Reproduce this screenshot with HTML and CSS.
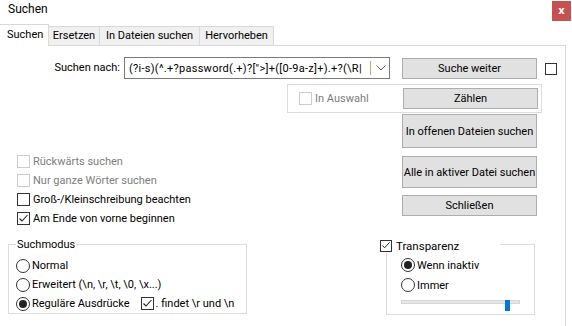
FILE: index.html
```html
<!DOCTYPE html>
<html lang="de">
<head>
<meta charset="utf-8">
<title>Suchen</title>
<link rel="stylesheet" href="styles.css">
</head>
<body>
<div class="window">
  <div class="titlebar">
    <span class="title">Suchen</span>
    <span class="close">x</span>
  </div>
  <div class="tabs">
    <div class="tab active">Suchen</div>
    <div class="tab t-ersetzen">Ersetzen</div>
    <div class="tab t-dateien">In Dateien suchen</div>
    <div class="tab t-hervor">Hervorheben</div>
  </div>
  <div class="panel">
    <div class="row-find">
      <label class="find-label">Suchen nach:</label>
      <div class="combo">
        <span class="combo-text">(?i-s)(^.+?password(.+)?["&gt;]+([0-9a-z]+).+?(\R|</span>
        <span class="combo-caret"></span>
        <span class="combo-arrow"><svg width="10" height="6" viewBox="0 0 10 6"><path d="M0.5 0.5 L5 5 L9.5 0.5" fill="none" stroke="#6d6d6d" stroke-width="1"/></svg></span>
      </div>
      <div class="btn btn-next">Suche weiter</div>
      <span class="cb cb-top"></span>
    </div>

    <div class="sel-group">
      <span class="cb disabled"></span>
      <span class="lbl disabled-text">In Auswahl</span>
      <div class="btn btn-count">Zählen</div>
    </div>

    <div class="mid">
      <div class="opts">
        <div class="opt"><span class="cb disabled"></span><span class="lbl disabled-text">Rückwärts suchen</span></div>
        <div class="opt"><span class="cb disabled"></span><span class="lbl disabled-text">Nur ganze Wörter suchen</span></div>
        <div class="opt"><span class="cb"></span><span class="lbl">Groß-/Kleinschreibung beachten</span></div>
        <div class="opt"><span class="cb checked"><svg width="11" height="11" viewBox="0 0 11 11"><path d="M1.5 5.5 L4 8 L9.5 2" fill="none" stroke="#222" stroke-width="1.1"/></svg></span><span class="lbl">Am Ende von vorne beginnen</span></div>
      </div>
      <div class="btncol">
        <div class="btn btn-open">In offenen Dateien suchen</div>
        <div class="btn btn-all">Alle in aktiver Datei suchen</div>
        <div class="btn btn-close">Schließen</div>
      </div>
    </div>

    <div class="bottom">
      <div class="group mode">
        <div class="legend legend-mode">Suchmodus</div>
        <div class="opt radio-row"><span class="radio"></span><span class="lbl">Normal</span></div>
        <div class="opt radio-row"><span class="radio"></span><span class="lbl">Erweitert (\n, \r, \t, \0, \x...)</span></div>
        <div class="opt radio-row"><span class="radio on"></span><span class="lbl">Reguläre Ausdrücke</span><span class="cb checked cb-dot"><svg width="11" height="11" viewBox="0 0 11 11"><path d="M1.5 5.5 L4 8 L9.5 2" fill="none" stroke="#222" stroke-width="1.1"/></svg></span><span class="lbl">. findet \r und \n</span></div>
      </div>
      <div class="group transp">
        <div class="legend legend-transp"><span class="cb checked"><svg width="11" height="11" viewBox="0 0 11 11"><path d="M1.5 5.5 L4 8 L9.5 2" fill="none" stroke="#222" stroke-width="1.1"/></svg></span><span class="lbl">Transparenz</span></div>
        <div class="opt radio-row2"><span class="radio on"></span><span class="lbl">Wenn inaktiv</span></div>
        <div class="opt radio-row2"><span class="radio"></span><span class="lbl">Immer</span></div>
        <div class="slider">
          <div class="track"></div>
          <div class="thumb" style="left: 104px"></div>
        </div>
      </div>
    </div>
  </div>
</div>
</body>
</html>
```

FILE: styles.css
```css
* { box-sizing: border-box; }
html, body {
  margin: 0;
  padding: 0;
  background: #ffffff;
}
body {
  width: 572px;
  height: 326px;
  overflow: hidden;
  font-family: Roboto, "Liberation Sans", sans-serif;
  font-size: 11px;
  color: #000;
}
.window {
  width: 572px;
  height: 326px;
  display: flex;
  flex-direction: column;
}
.titlebar {
  height: 24px;
  display: flex;
  justify-content: space-between;
  align-items: flex-start;
}
.title {
  font-size: 12px;
  line-height: 18px;
  padding-left: 8px;
}
.close {
  margin-top: 1px;
  margin-right: 1px;
  width: 19px;
  height: 20px;
  background: #c75050;
  color: #fff;
  font-weight: bold;
  font-size: 10px;
  line-height: 19px;
  text-align: center;
  font-family: "DejaVu Sans", sans-serif;
}
.tabs {
  height: 21px;
  display: flex;
  align-items: flex-end;
  position: relative;
  z-index: 1;
}
.tab {
  height: 19px;
  line-height: 18px;
  border: 1px solid #d9d9d9;
  border-bottom: none;
  border-left: none;
  background: #f0f0f0;
  text-align: center;
}
.tab.active {
  width: 49px;
  height: 22px;
  margin-bottom: -1px;
  line-height: 19px;
  background: #fff;
  text-align: left;
  padding-left: 7px;
}
.t-ersetzen { width: 51px; }
.t-dateien { width: 100px; }
.t-hervor { width: 74px; }

.panel {
  width: 566px;
  flex: 1;
  border-top: 1px solid #d9d9d9;
  border-right: 1px solid #d9d9d9;
}

.row-find {
  margin-top: 11px;
  display: flex;
  align-items: flex-start;
}
.find-label {
  width: 124px;
  padding-right: 4px;
  text-align: right;
  line-height: 22px;
}
.combo {
  width: 266px;
  height: 22px;
  border: 1px solid #7a7a7a;
  display: flex;
  align-items: center;
  overflow: hidden;
  background: #fff;
}
.combo-text {
  width: 245px;
  padding-left: 4px;
  white-space: nowrap;
  overflow: hidden;
  flex: none;
  letter-spacing: 0.28px;
}
.combo-caret {
  width: 1px;
  height: 14px;
  background: #e0a060;
  flex: none;
}
.combo-arrow {
  flex: 1;
  display: flex;
  justify-content: center;
  align-items: center;
  padding-left: 1px;
}
.btn {
  width: 135px;
  background: #e1e1e1;
  border: 1px solid #adadad;
  display: flex;
  align-items: center;
  justify-content: center;
  white-space: nowrap;
}
.btn-next {
  margin-left: 12px;
  margin-top: 1px;
  height: 21px;
}
.cb {
  width: 13px;
  height: 13px;
  border: 1px solid #333;
  background: #fff;
  flex: none;
  display: inline-flex;
  align-items: center;
  justify-content: center;
}
.cb svg { display: block; }
.cb-top {
  margin-left: 8px;
  margin-top: 6px;
  width: 12px;
  height: 12px;
}
.cb.disabled { border-color: #cccccc; }
.disabled-text { color: #7d7d7d; }
.lbl {
  margin-left: 3px;
  white-space: nowrap;
}

.sel-group {
  margin-top: 5px;
  margin-left: 287px;
  width: 255px;
  height: 29px;
  border: 1px solid #dcdcdc;
  display: flex;
  align-items: center;
  padding-left: 11px;
}
.btn-count {
  margin-left: auto;
  margin-right: 3px;
  height: 21px;
}

.mid {
  margin-top: 1px;
  display: flex;
}
.opts {
  width: 402px;
  padding-left: 17px;
  padding-top: 38px;
}
.opt {
  height: 19px;
  display: flex;
  align-items: center;
}
.btncol {
  display: flex;
  flex-direction: column;
}
.btn-open { height: 34px; }
.btn-all { height: 32px; margin-top: 8px; }
.btn-close { height: 21px; margin-top: 7px; }

.bottom {
  margin-top: 16px;
  display: flex;
  align-items: flex-start;
}
.group {
  position: relative;
  border: 1px solid #dcdcdc;
}
.legend {
  position: absolute;
  top: -8px;
  height: 15px;
  background: #fff;
  display: flex;
  align-items: center;
  white-space: nowrap;
}
.mode {
  margin-left: 8px;
  width: 239px;
  height: 70px;
  padding-top: 11px;
  padding-left: 7px;
}
.legend-mode {
  left: 7px;
  padding: 0 1px;
}
.radio {
  width: 14px;
  height: 14px;
  border: 1px solid #333;
  border-radius: 50%;
  background: #fff;
  flex: none;
  display: inline-flex;
  align-items: center;
  justify-content: center;
}
.radio.on::after {
  content: "";
  width: 8px;
  height: 8px;
  border-radius: 50%;
  background: #222;
}
.radio-row .lbl { margin-left: 2px; }
.cb-dot {
  margin-left: 11px;
}
.transp {
  margin-left: 139px;
  width: 149px;
  height: 71px;
  padding-top: 10px;
  padding-left: 14px;
}
.legend-transp {
  left: -7px;
  top: -7px;
  width: 120px;
}
.legend-transp .cb { width: 12px; height: 12px; }
.legend-transp .lbl { margin-left: 4px; font-size: 11.5px; }
.radio-row2 {
  height: 20px;
}
.radio-row2 .lbl { margin-left: 2px; }
.slider {
  position: relative;
  margin-top: 5px;
  width: 119px;
  height: 12px;
}
.track {
  margin-top: 4px;
  width: 119px;
  height: 4px;
  background: #e7e7e7;
  border: 1px solid #d6d6d6;
}
.thumb {
  position: absolute;
  top: 0;
  width: 5px;
  height: 11px;
  background: #0078d7;
}
```
